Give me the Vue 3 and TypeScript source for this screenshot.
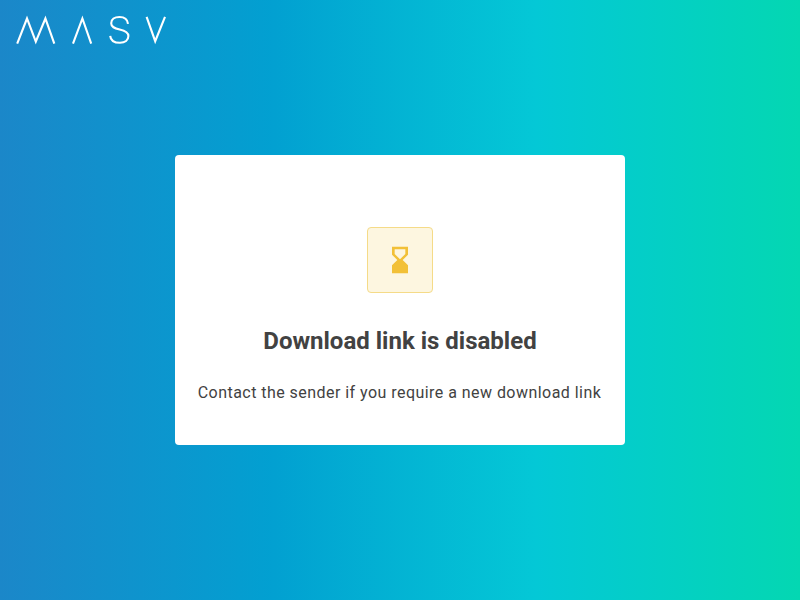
<script setup lang="ts">
const title: string = 'Download link is disabled'
const message: string = 'Contact the sender if you require a new download link'
</script>

<template>
  <div class="page">
    <header class="header">
      <svg class="logo" width="150" height="30" viewBox="0 0 150 30" role="img" aria-label="MASV">
        <g fill="none" stroke="#fff" stroke-width="2.1">
          <path d="M1.200 28.700 11 3.500 19.800 26.600 29.400 3.500 38.300 28.700" />
          <path d="M57 28.700 66.400 3.500 75.200 28.700" />
          <path d="M112 8.800C111.500 4.500 108.300 2 103.500 2C98.500 2 95.200 4.500 95.200 8.200C95.200 11.900 98.200 13.200 103.700 14.500C109.200 15.700 112.400 17.300 112.400 21.100C112.400 25.200 109 27.800 104 27.800C98 27.800 94.600 25.200 94.200 20.800" />
          <path d="M130.600 1.800 139.200 26.200 149 1.800" />
        </g>
      </svg>
    </header>
    <main class="card">
      <div class="badge">
        <svg width="32" height="32" viewBox="0 0 24 24" fill="#f2c037">
          <path d="M6 2v6h.01L6 8.010 10 12l-4 4 .01.010H6V22h12v-5.990h-.01L18 16l-4-4 4-3.990-.01-.010H18V2H6zm10 5.500-4 4-4-4V4h8v3.500z" />
        </svg>
      </div>
      <h1 class="title">{{ title }}</h1>
      <p class="message">{{ message }}</p>
    </main>
  </div>
</template>

<style>
body {
  margin: 0;
}
</style>

<style scoped>
.page {
  box-sizing: border-box;
  height: 100vh;
  display: grid;
  grid-template: 100% / 100%;
  background: linear-gradient(90deg, #1b87c9 0%, #02a0d1 34%, #04c8d6 67%, #04d7b2 100%);
  font-family: Roboto, sans-serif;
  color: #424242;
}
.header {
  grid-area: 1 / 1;
  padding: 15px 16px;
}
.logo {
  display: block;
}
.card {
  grid-area: 1 / 1;
  place-self: center;
  box-sizing: border-box;
  width: 450px;
  height: 290px;
  padding-top: 72px;
  display: flex;
  flex-direction: column;
  align-items: center;
  background: #fff;
  border-radius: 4px;
}
.badge {
  box-sizing: border-box;
  width: 66px;
  height: 66px;
  display: flex;
  align-items: center;
  justify-content: center;
  background: #fdf6e0;
  border: 1px solid #f5db88;
  border-radius: 4px;
}
.title {
  margin: 32px 0 0;
  font-size: 24px;
  line-height: 32px;
  font-weight: 700;
}
.message {
  margin: 24px 0 0;
  padding-right: 1px;
  font-size: 16px;
  line-height: 24px;
  letter-spacing: 0.455px;
}
</style>
